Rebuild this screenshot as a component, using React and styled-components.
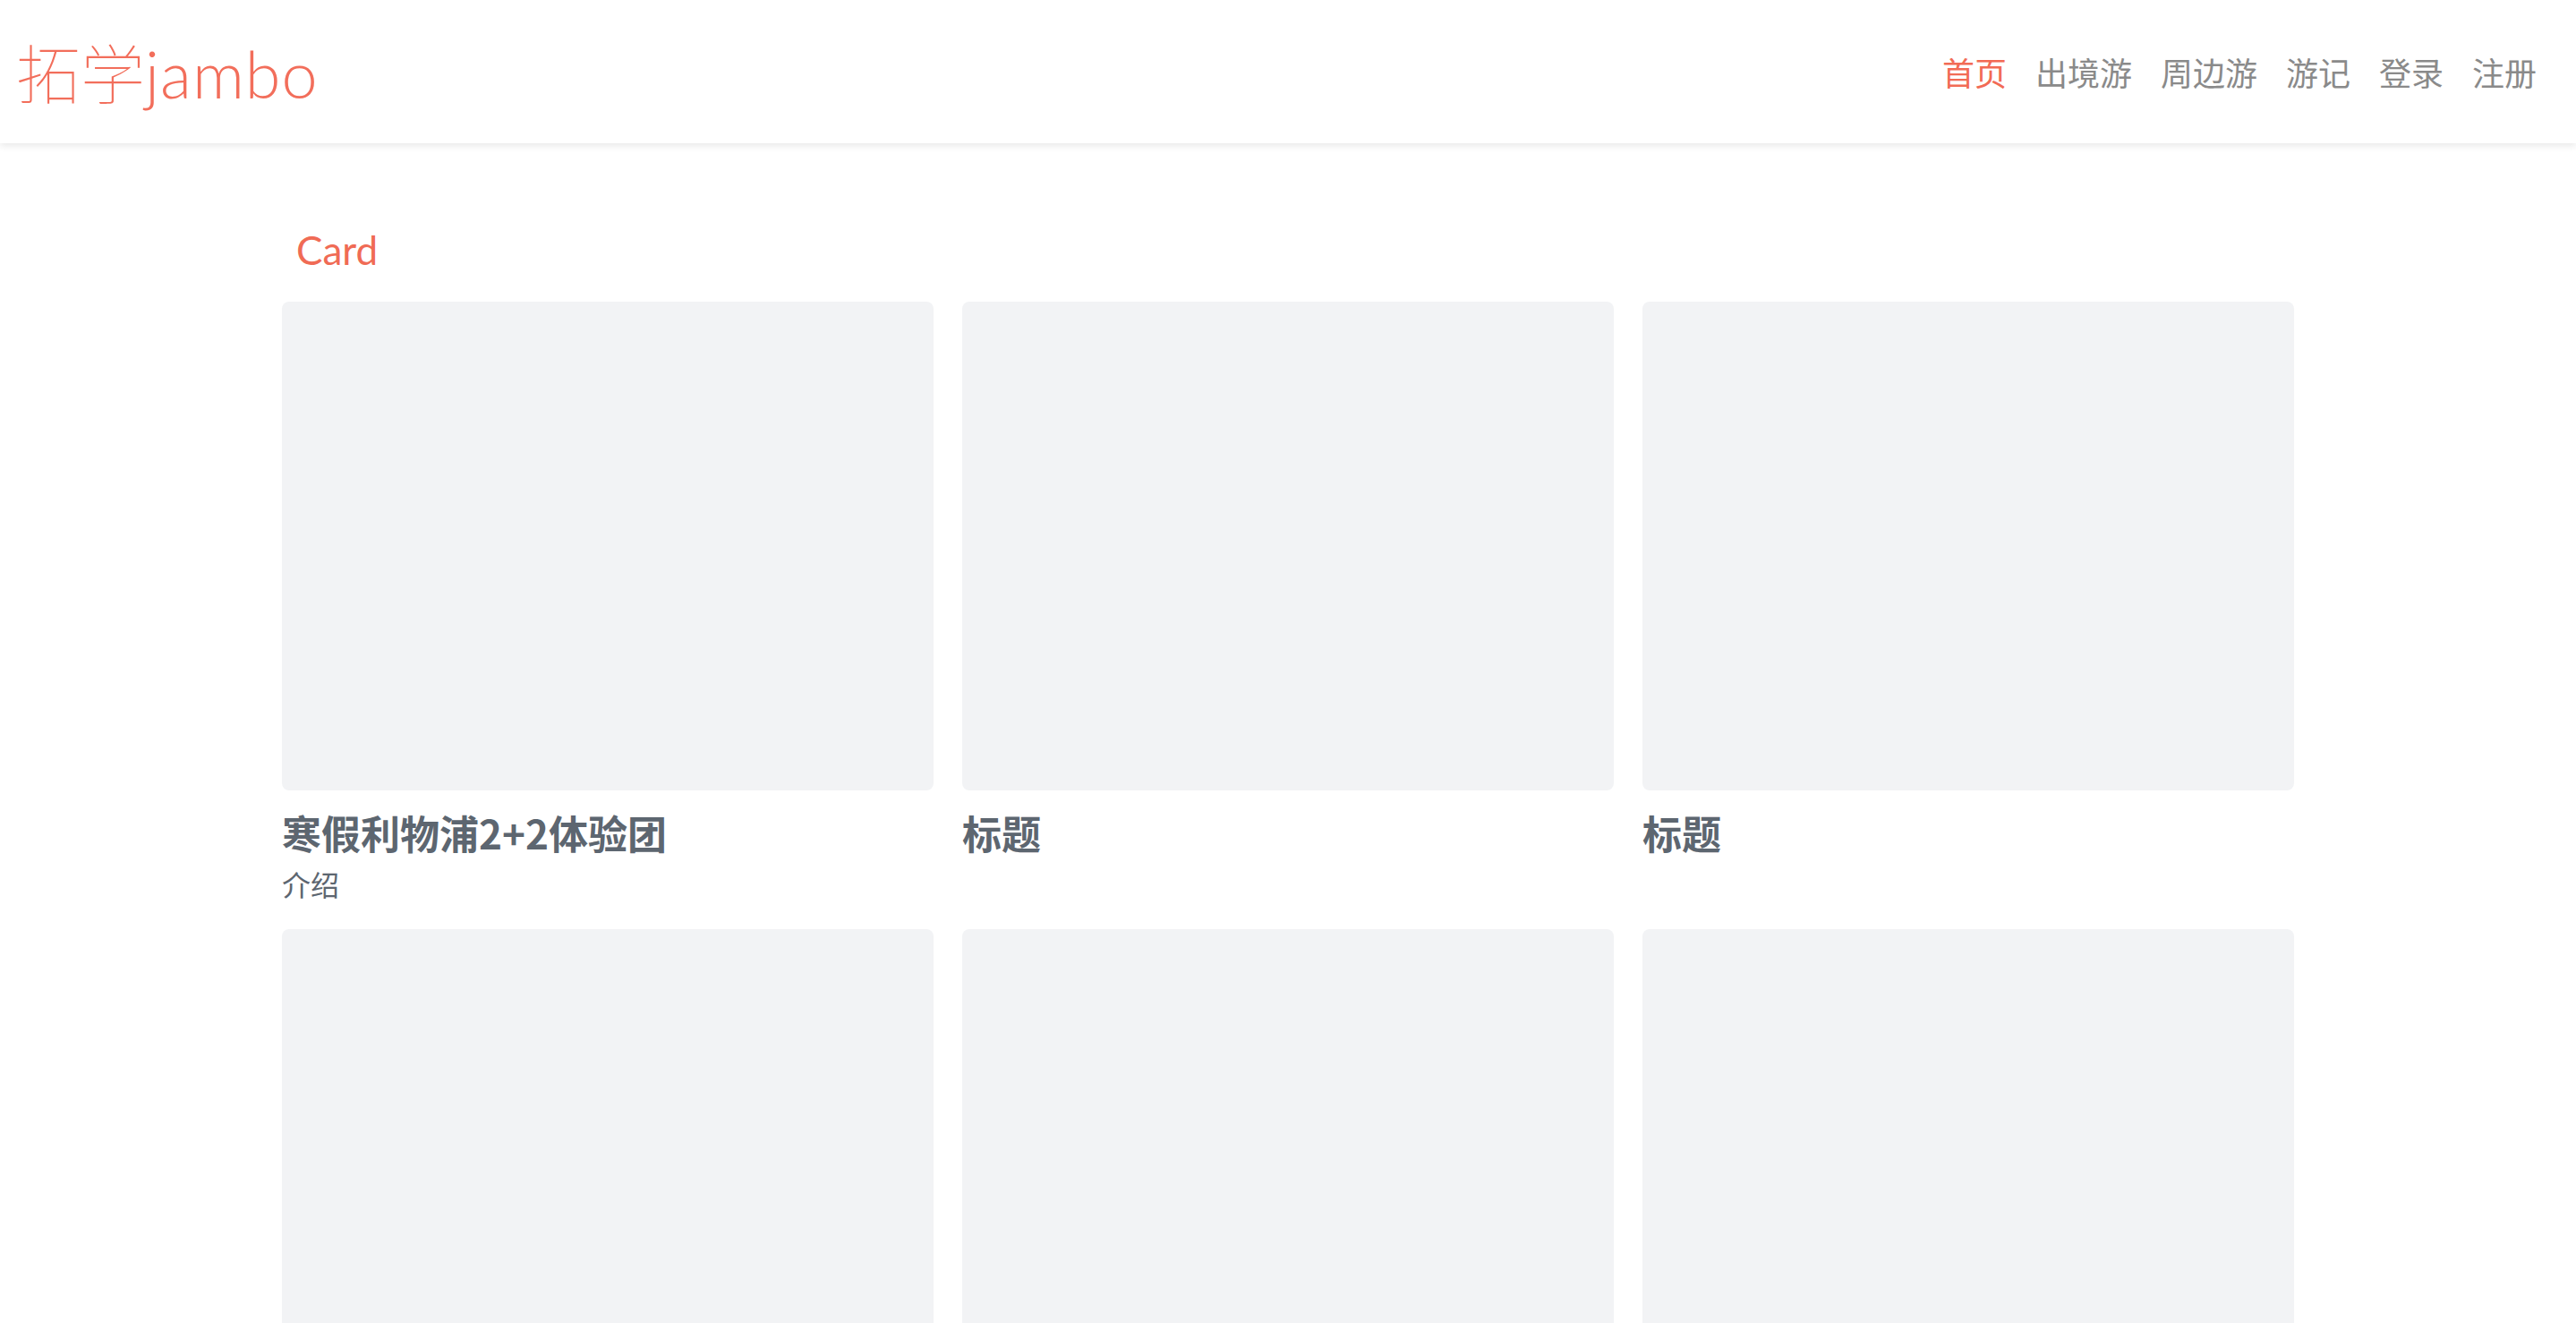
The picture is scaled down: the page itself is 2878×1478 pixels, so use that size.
import styled, { createGlobalStyle } from "styled-components";

const GlobalStyle = createGlobalStyle`
  body {
    margin: 0;
    background: #ffffff;
    font-family: "Lato", "Noto Sans CJK SC", sans-serif;
  }
`;

const navItems = ["首页", "出境游", "周边游", "游记", "登录", "注册"];

const cards = [
  { title: "寒假利物浦2+2体验团", desc: "介绍" },
  { title: "标题" },
  { title: "标题" },
  {},
  {},
  {},
];

export default function App() {
  return (
    <>
      <GlobalStyle />
      <Header>
        <Logo>拓学<LogoLatin>jambo</LogoLatin></Logo>
        <Nav>
          {navItems.map((item, i) => (
            <NavLink key={item} $active={i === 0}>{item}</NavLink>
          ))}
        </Nav>
      </Header>
      <Main>
        <SectionTitle>Card</SectionTitle>
        <Grid>
          {cards.map((card, i) => (
            <Card key={i}>
              <Cover />
              {card.title && <CardTitle>{card.title}</CardTitle>}
              {card.desc && <CardDesc>{card.desc}</CardDesc>}
            </Card>
          ))}
        </Grid>
      </Main>
    </>
  );
}

const Header = styled.header`
    height: 160px;
    background: #ffffff;
    display: flex;
    align-items: center;
    justify-content: space-between;
    padding: 0 44px 0 18px;
    box-shadow: 0 3px 8px 0 rgba(0, 0, 0, 0.09);
    position: relative;
    z-index: 1;
`;

const Logo = styled.a`
    font-family: "Noto Sans CJK SC", sans-serif;
    font-weight: 100;
    font-size: 72px;
    color: #f26e5b;
    text-decoration: none;
    line-height: 1;
`;

const LogoLatin = styled.span`
    font-family: "Lato", sans-serif;
    font-weight: 300;
    letter-spacing: 1px;
`;

const Nav = styled.nav`
    display: flex;
    align-items: center;
    gap: 32px;
`;

const NavLink = styled.a`
    font-family: "Noto Sans CJK SC", sans-serif;
    font-size: 36px;
    color: ${(p) => (p.$active ? "#f26b55" : "#8a8a8a")};
    text-decoration: none;
    cursor: pointer;
`;

const Main = styled.main`
    width: 2248px;
    margin: 0 auto;
    padding-top: 86px;
`;

const SectionTitle = styled.h2`
    margin: 0 0 25px 16px;
    font-family: "Lato", sans-serif;
    font-weight: 400;
    font-size: 44px;
    line-height: 66px;
    color: #f06b55;
`;

const Grid = styled.div`
    display: grid;
    grid-template-columns: repeat(3, 728px);
    column-gap: 32px;
    row-gap: 27px;
    align-items: start;
`;

const Card = styled.div`
    display: flex;
    flex-direction: column;
`;

const Cover = styled.div`
    height: 546px;
    background: #f2f3f5;
    border-radius: 8px;
`;

const CardTitle = styled.h3`
    margin: 14px 0 0;
    font-family: "Noto Sans CJK SC", sans-serif;
    font-weight: 700;
    font-size: 44px;
    line-height: 66px;
    color: #5d6670;
`;

const CardDesc = styled.p`
    margin: 0;
    font-family: "Noto Sans CJK SC", sans-serif;
    font-size: 32px;
    line-height: 48px;
    color: #5d6670;
`;
